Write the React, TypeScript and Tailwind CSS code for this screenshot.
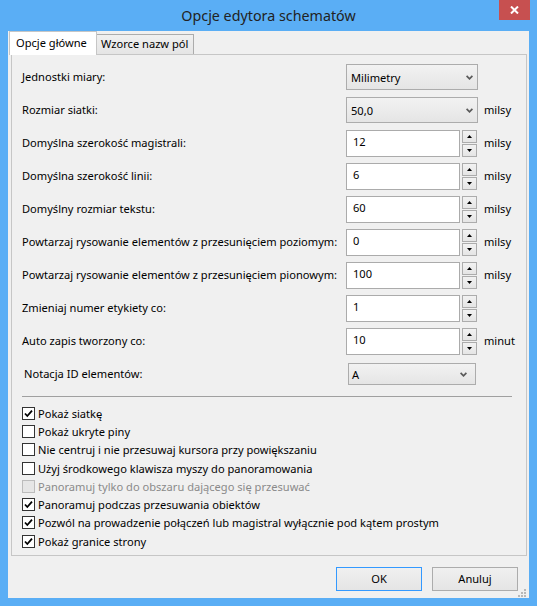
import React from "react";

const Chevron = () => (
  <svg width="7" height="5" viewBox="0 0 7 5" className="block">
    <path d="M0.6 0.8 L3.5 3.8 L6.4 0.8" fill="none" stroke="#5a5a5a" strokeWidth="1.7" />
  </svg>
);

function Select({ value, w = "w-[132px]", h = "h-[26px]", extra = "" }: { value: string; w?: string; h?: string; extra?: string }) {
  return (
    <div
      className={`${w} ${h} ${extra} border border-[#acacac] bg-gradient-to-b from-[#f2f2f2] to-[#e5e5e5] flex items-center justify-between pl-[4px] pr-[4px]`}
    >
      <span className="leading-[15px]">{value}</span>
      <Chevron />
    </div>
  );
}

function Spin({ value }: { value: string }) {
  return (
    <div className="flex gap-[2px]">
      <div className="w-[114px] h-[27px] bg-white border border-[#ababab] pl-[6px] pt-[3px] leading-[15px]">{value}</div>
      <div className="flex flex-col gap-[1px]">
        <div className="w-[15px] h-[13px] border border-[#acacac] bg-gradient-to-b from-[#f2f2f2] to-[#e5e5e5] flex items-center justify-center">
          <svg width="5" height="3" viewBox="0 0 5 3" className="block">
            <path d="M0 3 L2.5 0 L5 3 Z" fill="#000" />
          </svg>
        </div>
        <div className="w-[15px] h-[13px] border border-[#acacac] bg-gradient-to-b from-[#f2f2f2] to-[#e5e5e5] flex items-center justify-center">
          <svg width="5" height="3" viewBox="0 0 5 3" className="block">
            <path d="M0 0 L2.5 3 L5 0 Z" fill="#000" />
          </svg>
        </div>
      </div>
    </div>
  );
}

function Row({ label, children, unit }: { label: string; children: React.ReactNode; unit?: string }) {
  return (
    <div className="h-[33px] grid grid-cols-[324px_138px_auto] items-start">
      <div className="h-[27px] flex items-center whitespace-nowrap">{label}</div>
      <div>{children}</div>
      <div className="h-[27px] flex items-center">{unit ?? ""}</div>
    </div>
  );
}

function Check({ label, checked, disabled }: { label: string; checked?: boolean; disabled?: boolean }) {
  return (
    <div className="h-[18.3px] flex items-center gap-[3px]">
      <div
        className={`w-[13px] h-[13px] border flex items-center justify-center ${
          disabled ? "border-[#bcbcbc] bg-[#e6e6e6]" : "border-[#333333] bg-white"
        }`}
      >
        {checked && (
          <svg width="11" height="11" viewBox="0 0 11 11" className="block">
            <path d="M2 5.5 L4.3 8 L9 2.6" fill="none" stroke="#000" strokeWidth="1.8" />
          </svg>
        )}
      </div>
      <span className={`leading-[15px] whitespace-nowrap ${disabled ? "text-[#8a8a8a]" : ""}`}>{label}</span>
    </div>
  );
}

export default function App() {
  return (
    <div className="w-[537px] h-[606px] bg-[#5aaef5] flex flex-col font-['Noto_Sans',sans-serif] text-[11.1px] text-black">
      <div className="h-[31px] relative flex items-center justify-center">
        <span className="text-[14.3px] text-[#222222] leading-[20px]">Opcje edytora schematów</span>
        <div className="absolute right-[7px] top-0 w-[31px] h-[20px] bg-[#c75050] flex items-center justify-center">
          <svg width="9" height="8" viewBox="0 0 9 8" className="block">
            <path d="M1 0.5 L8 7.5 M8 0.5 L1 7.5" stroke="#fff" strokeWidth="2" />
          </svg>
        </div>
      </div>
      <div className="mx-[8px] h-[567px] bg-[#f0f0f0] relative flex flex-col">
        <div className="h-[24px] flex items-end pl-[1px]">
          <div className="relative z-10 w-[88px] h-[24px] bg-white border-l border-t border-r border-[#c6c6c6] pl-[6px] pt-[2px] leading-[18px] whitespace-nowrap">
            Opcje główne
          </div>
          <div className="w-[97px] h-[20px] mb-[1px] border-t border-r border-[#acacac] bg-gradient-to-b from-[#f0f0f0] to-[#e5e5e5] pl-[4px] leading-[18px] whitespace-nowrap">
            Wzorce nazw pól
          </div>
        </div>
        <div className="-mt-[1px] ml-[3px] w-[516px] h-[502px] border border-[#c6c6c6] bg-[#f0f0f0] pl-[10px] pt-[9px] flex flex-col">
          <Row label="Jednostki miary:">
            <Select value="Milimetry" />
          </Row>
          <Row label="Rozmiar siatki:" unit="milsy">
            <Select value="50,0" />
          </Row>
          <Row label="Domyślna szerokość magistrali:" unit="milsy">
            <Spin value="12" />
          </Row>
          <Row label="Domyślna szerokość linii:" unit="milsy">
            <Spin value="6" />
          </Row>
          <Row label="Domyślny rozmiar tekstu:" unit="milsy">
            <Spin value="60" />
          </Row>
          <Row label="Powtarzaj rysowanie elementów z przesunięciem poziomym:" unit="milsy">
            <Spin value="0" />
          </Row>
          <Row label="Powtarzaj rysowanie elementów z przesunięciem pionowym:" unit="milsy">
            <Spin value="100" />
          </Row>
          <Row label="Zmieniaj numer etykiety co:">
            <Spin value="1" />
          </Row>
          <Row label="Auto zapis tworzony co:" unit="minut">
            <Spin value="10" />
          </Row>
          <div className="h-[24px] grid grid-cols-[324px_138px_auto] items-end">
            <div className="h-[22px] flex items-center pl-[2px]">Notacja ID elementów:</div>
            <div>
              <Select value="A" w="w-[128px]" h="h-[22px]" extra="ml-[2px] !pl-[3px] !pr-[8px]" />
            </div>
            <div />
          </div>
          <div className="mt-[11px] w-[490px] h-[1px] bg-[#a0a0a0]" />
          <div className="mt-[7px] flex flex-col">
            <Check label="Pokaż siatkę" checked />
            <Check label="Pokaż ukryte piny" />
            <Check label="Nie centruj i nie przesuwaj kursora przy powiększaniu" />
            <Check label="Użyj środkowego klawisza myszy do panoramowania" />
            <Check label="Panoramuj tylko do obszaru dającego się przesuwać" disabled />
            <Check label="Panoramuj podczas przesuwania obiektów" checked />
            <Check label="Pozwól na prowadzenie połączeń lub magistral wyłącznie pod kątem prostym" checked />
            <Check label="Pokaż granice strony" checked />
          </div>
        </div>
        <div className="mt-[11px] flex justify-end gap-[10px] pr-[11px]">
          <div className="w-[86px] h-[24px] border border-[#3399ff] bg-gradient-to-b from-[#f0f0f0] to-[#e5e5e5] flex items-center justify-center">
            OK
          </div>
          <div className="w-[86px] h-[24px] border border-[#acacac] bg-gradient-to-b from-[#f0f0f0] to-[#e5e5e5] flex items-center justify-center">
            Anuluj
          </div>
        </div>
        <svg width="8" height="8" viewBox="0 0 8 8" className="absolute right-[3px] bottom-[1px]">
          <rect x="6" y="0" width="2" height="2" fill="#b8b8b8" />
          <rect x="3" y="3" width="2" height="2" fill="#b8b8b8" />
          <rect x="6" y="3" width="2" height="2" fill="#b8b8b8" />
          <rect x="0" y="6" width="2" height="2" fill="#b8b8b8" />
          <rect x="3" y="6" width="2" height="2" fill="#b8b8b8" />
          <rect x="6" y="6" width="2" height="2" fill="#b8b8b8" />
        </svg>
      </div>
    </div>
  );
}
